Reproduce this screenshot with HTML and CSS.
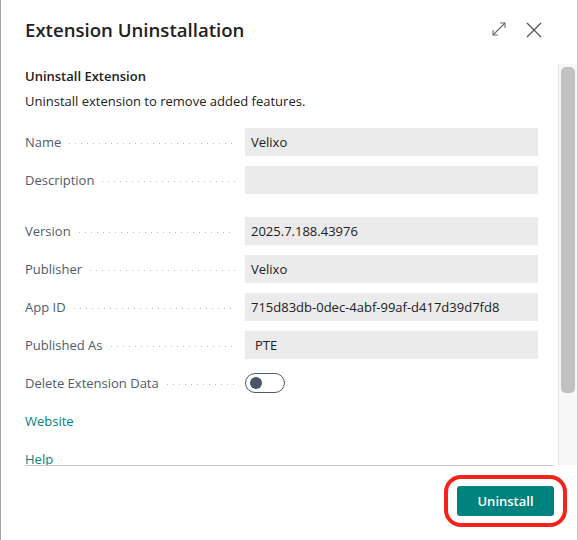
FILE: index.html
```html
<!DOCTYPE html>
<html lang="en">
<head>
  <meta charset="UTF-8" />
  <meta name="viewport" content="width=device-width, initial-scale=1.0" />
  <title>Extension Uninstallation</title>
  <link rel="stylesheet" href="styles.css">
</head>
<body>
  <div class="dialog">
    <div class="dialog-header">
      <h1>Extension Uninstallation</h1>
      <div class="header-actions">
        <button class="icon-btn" title="Expand">
          <svg width="16" height="16" viewBox="0 0 16 16" fill="none" stroke="#6b6b6b" stroke-width="1.1">
            <path d="M2 14 L14 2" />
            <path d="M9 2 H14 V7" />
            <path d="M2 9 V14 H7" />
          </svg>
        </button>
        <button class="icon-btn" title="Close">
          <svg width="18" height="18" viewBox="0 0 18 18" fill="none" stroke="#555" stroke-width="1.3">
            <path d="M2 2 L16 16 M16 2 L2 16" />
          </svg>
        </button>
      </div>
    </div>

    <div class="dialog-body">
      <div class="content">
        <div class="intro">
          <h2>Uninstall Extension</h2>
          <p>Uninstall extension to remove added features.</p>
        </div>

        <div class="group">
          <div class="field">
            <label><span>Name</span><i class="leader"></i></label>
            <div class="value">Velixo</div>
          </div>
          <div class="field">
            <label><span>Description</span><i class="leader"></i></label>
            <div class="value"></div>
          </div>
        </div>

        <div class="group">
          <div class="field">
            <label><span>Version</span><i class="leader"></i></label>
            <div class="value">2025.7.188.43976</div>
          </div>
          <div class="field">
            <label><span>Publisher</span><i class="leader"></i></label>
            <div class="value">Velixo</div>
          </div>
          <div class="field">
            <label><span>App ID</span><i class="leader"></i></label>
            <div class="value">715d83db-0dec-4abf-99af-d417d39d7fd8</div>
          </div>
          <div class="field">
            <label><span>Published As</span><i class="leader"></i></label>
            <div class="value indent">PTE</div>
          </div>
          <div class="field">
            <label><span>Delete Extension Data</span><i class="leader"></i></label>
            <div class="toggle"><span class="knob"></span></div>
          </div>
          <div class="link-row"><a href="#">Website</a></div>
          <div class="link-row"><a href="#">Help</a></div>
        </div>
      </div>
      <div class="scrollbar"><div class="thumb"></div></div>
    </div>

    <div class="dialog-footer">
      <span class="highlight">
        <button class="primary">Uninstall</button>
      </span>
    </div>
  </div>
</body>
</html>
```

FILE: styles.css
```css
html, body {
  margin: 0;
  padding: 0;
  background: #fff;
}
body {
  font-family: "Open Sans", "Noto Sans", Arial, sans-serif;
  font-size: 13px;
  color: #212121;
}
.dialog {
  width: 578px;
  height: 540px;
  box-sizing: border-box;
  border-left: 1px solid #a6a6a6;
  border-right: 1px solid #c8c8c8;
  display: flex;
  flex-direction: column;
  overflow: hidden;
}
.dialog-header {
  height: 64px;
  display: flex;
  align-items: flex-start;
  justify-content: space-between;
  padding: 15px 34px 0 24px;
  box-sizing: border-box;
}
.dialog-header h1 {
  margin: 0;
  font-size: 18.6px;
  font-weight: 600;
  color: #212121;
  line-height: 30px;
}
.header-actions {
  display: flex;
  gap: 18px;
  padding-top: 6px;
}
.icon-btn {
  background: none;
  border: 0;
  padding: 0;
  display: flex;
}
.dialog-body {
  height: 401px;
  display: flex;
}
.content {
  flex: 1;
  overflow: hidden;
  padding: 0 24px 0 24px;
}
.intro h2 {
  margin: 3px 0 0;
  font-size: 13px;
  font-weight: 600;
  line-height: 18px;
}
.intro p {
  margin: 7px 0 0;
  line-height: 18px;
}
.group {
  margin-top: 18px;
  display: flex;
  flex-direction: column;
  gap: 10px;
}
.group + .group {
  margin-top: 23px;
}
.field {
  display: grid;
  grid-template-columns: 220px 293px;
  align-items: center;
  height: 28px;
}
.field label {
  display: flex;
  align-items: center;
  color: #4f5b6b;
  padding-right: 10px;
}
.leader {
  flex: 1;
  height: 1px;
  margin: 2px 0 0 8px;
  background: repeating-linear-gradient(to right, #b9bec6 0 1px, transparent 1px 6px);
}
.value {
  height: 28px;
  line-height: 28px;
  background: #ebebec;
  padding: 0 6px;
  white-space: nowrap;
}
.value.indent {
  padding-left: 10px;
}
.toggle {
  width: 40px;
  height: 20px;
  box-sizing: border-box;
  border: 1px solid #4f5b6b;
  border-radius: 10px;
  display: flex;
  align-items: center;
  padding-left: 4px;
}
.knob {
  width: 12px;
  height: 12px;
  border-radius: 50%;
  background: #4a5568;
}
.link-row {
  height: 28px;
  line-height: 28px;
}
.link-row a {
  color: #00827f;
  text-decoration: none;
}
.scrollbar {
  width: 14px;
  border-left: 1px solid #e4e4e4;
  background: #f7f7f7;
  padding: 3px 2px 0 2px;
}
.thumb {
  height: 326px;
  border-radius: 5px;
  background: #c1c1c1;
}
.dialog-footer {
  margin: 0 23px 0 24px;
  border-top: 1px solid #c8c8c8;
  padding-top: 20px;
  display: flex;
  justify-content: flex-end;
}
.highlight {
  position: relative;
  display: flex;
}
.highlight::after {
  content: "";
  position: absolute;
  top: -11px;
  bottom: -11px;
  left: -13px;
  right: -13px;
  border: 4px solid #f5231b;
  border-radius: 17px;
}
.primary {
  width: 97px;
  height: 30px;
  border: 0;
  border-radius: 3px;
  background: #00827f;
  color: #fff;
  font-family: inherit;
  font-size: 13px;
  font-weight: 600;
}
```
